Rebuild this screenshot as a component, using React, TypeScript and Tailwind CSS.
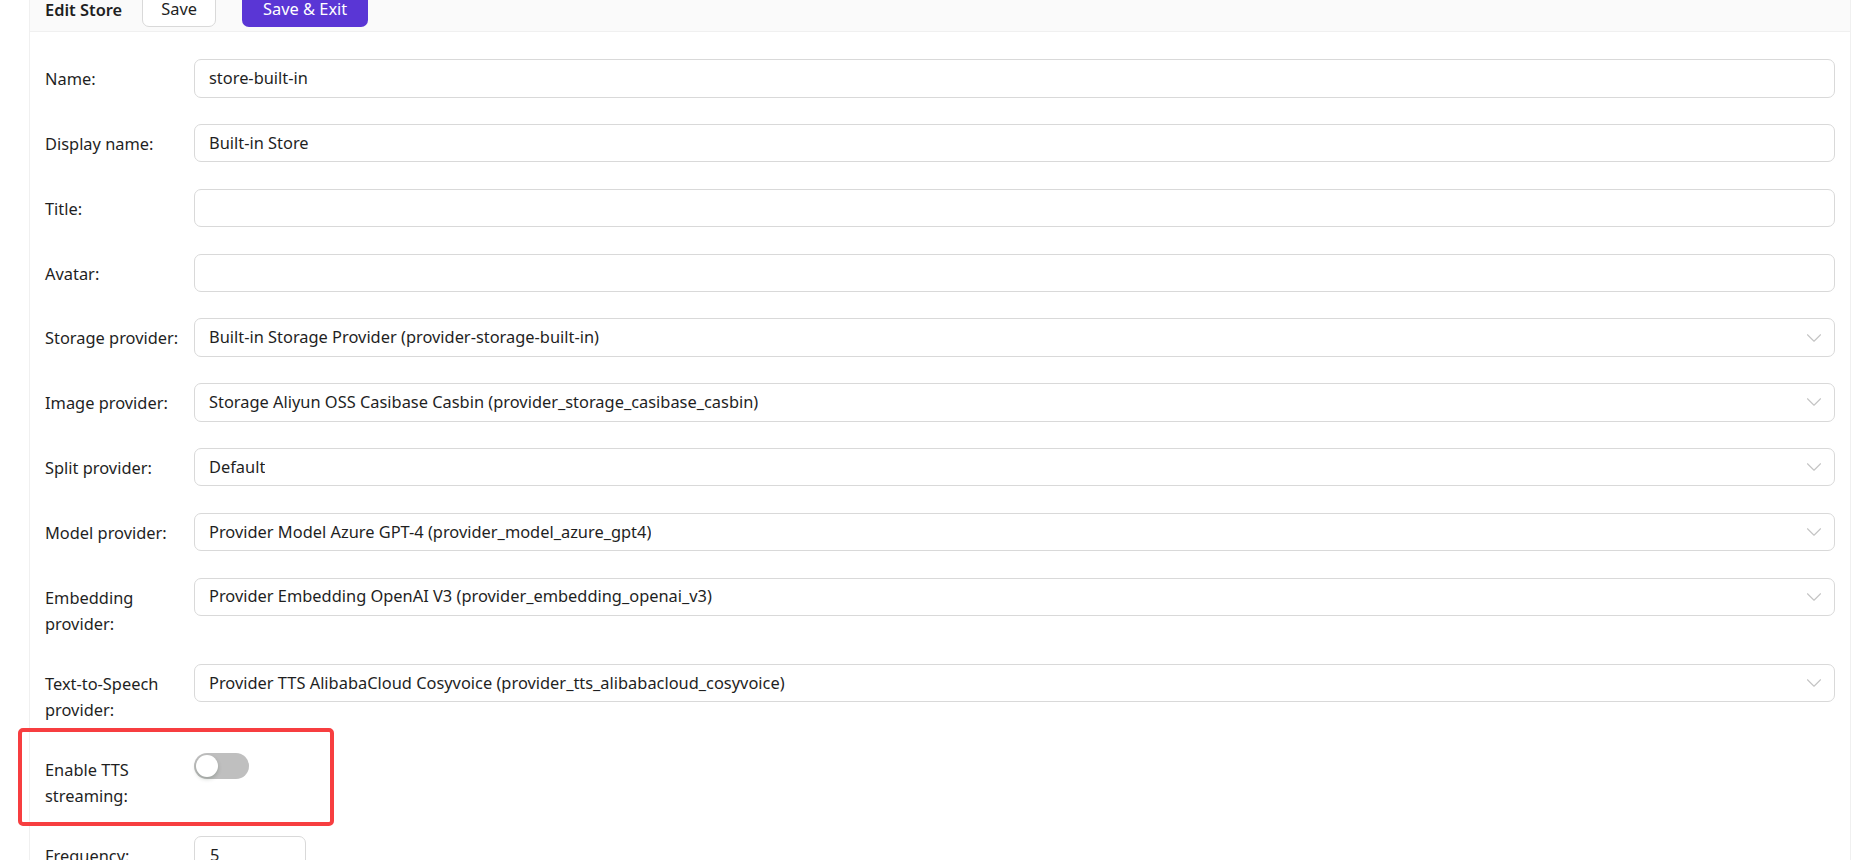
import { ChevronDown } from 'lucide-react';

type Field = {
  label: string;
  value?: string;
  select?: boolean;
};

const fields: Field[] = [
  { label: 'Name:', value: 'store-built-in' },
  { label: 'Display name:', value: 'Built-in Store' },
  { label: 'Title:', value: '' },
  { label: 'Avatar:', value: '' },
  { label: 'Storage provider:', value: 'Built-in Storage Provider (provider-storage-built-in)', select: true },
  { label: 'Image provider:', value: 'Storage Aliyun OSS Casibase Casbin (provider_storage_casibase_casbin)', select: true },
  { label: 'Split provider:', value: 'Default', select: true },
  { label: 'Model provider:', value: 'Provider Model Azure GPT-4 (provider_model_azure_gpt4)', select: true },
  { label: 'Embedding provider:', value: 'Provider Embedding OpenAI V3 (provider_embedding_openai_v3)', select: true },
  {
    label: 'Text-to-Speech provider:',
    value: 'Provider TTS AlibabaCloud Cosyvoice (provider_tts_alibabacloud_cosyvoice)',
    select: true,
  },
];

function Label({ children }: { children: React.ReactNode }) {
  return <div className="pt-[7px] pr-[4px] leading-[26.4px]">{children}</div>;
}

function FieldRow({ field }: { field: Field }) {
  return (
    <div className="grid grid-cols-[149px_1fr] items-start">
      <Label>{field.label}</Label>
      <div className="h-[38.4px] flex items-center justify-between border border-[#d9d9d9] rounded-[7px] bg-white pl-[14px] pr-[7px]">
        <span className="truncate">{field.value}</span>
        {field.select && <ChevronDown size={26} strokeWidth={1} className="shrink-0 text-[#c4c4c4]" />}
      </div>
    </div>
  );
}

export default function App() {
  return (
    <div className="relative min-h-screen bg-white text-[16.4px] text-[#1f1f1f] font-['Segoe_UI','Noto_Sans',sans-serif]">
      <div className="ml-[29px] mr-[18px] min-h-screen border-x border-[#f0f0f0]">
        <div className="h-[32px] overflow-hidden bg-[#fafafa] border-b border-[#f0f0f0] flex items-end pl-[15px] pb-[4px]">
          <div className="flex items-center h-[38.4px] shrink-0">
            <span className="font-semibold pt-[4px]">Edit Store</span>
            <button className="ml-[20px] w-[74px] h-[38.4px] pt-[3px] bg-white border border-[#d9d9d9] rounded-[7px]">
              Save
            </button>
            <button className="ml-[26px] w-[126px] h-[38.4px] pt-[3px] bg-[#5a36d5] text-white rounded-[7px]">
              Save &amp; Exit
            </button>
          </div>
        </div>

        <div className="px-[15px] pt-[27.3px] pb-[40px] flex flex-col gap-[26.4px]">
          {fields.map((f) => (
            <FieldRow key={f.label} field={f} />
          ))}

          <div className="grid grid-cols-[149px_1fr] items-start">
            <Label>Enable TTS streaming:</Label>
            <div className="pt-[3px]">
              <div className="relative w-[55px] h-[26.4px] rounded-full bg-[#bfbfbf]">
                <div className="absolute left-[2.4px] top-[2.4px] w-[21.6px] h-[21.6px] rounded-full bg-white shadow-[0_2px_4px_rgba(0,35,11,0.2)]" />
              </div>
            </div>
          </div>

          <div className="grid grid-cols-[149px_1fr] items-start">
            <Label>Frequency:</Label>
            <div className="w-[112px] h-[38.4px] flex items-center border border-[#d9d9d9] rounded-[7px] pl-[15px]">
              5
            </div>
          </div>
        </div>
      </div>

      {/* annotation box */}
      <div className="absolute left-[18px] top-[728px] w-[316px] h-[98px] border-[4px] border-[#f73e40] rounded-[5px]" />
    </div>
  );
}
